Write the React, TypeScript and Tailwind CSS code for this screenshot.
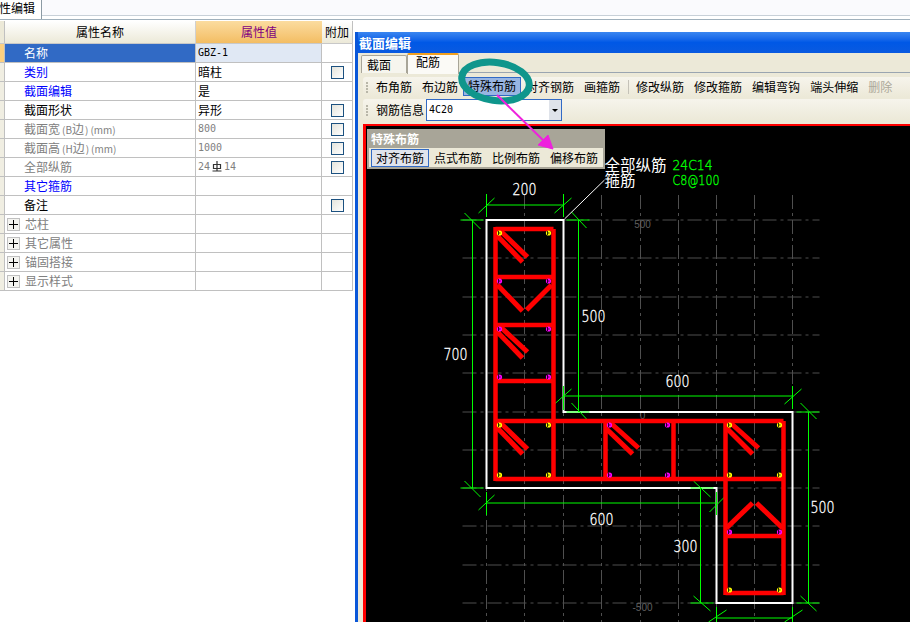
import type { ReactNode } from 'react'

type Row = {
  label: ReactNode
  value?: ReactNode
  color: string
  check?: boolean
  tree?: boolean
  selected?: boolean
}

const ValueNum = ({ children }: { children: ReactNode }) => (
  <span className="font-['DejaVu_Sans_Mono',monospace] text-[10px] text-[#808080]">{children}</span>
)

const RebarMark = () => (
  <svg width="10" height="11" viewBox="0 0 10 11" className="mx-[2px] inline-block align-[-2px]">
    <path d="M5 0V10M0.5 10H9.5M1.5 3.5H8.5V7.5H1.5Z" fill="none" stroke="#333" strokeWidth="1.2" />
  </svg>
)

const SizeLabel = ({ name, axis }: { name: string; axis: string }) => (
  <>
    {name}
    <span className="ml-[2px] text-[10px]">({axis}</span>边
    <span className="ml-[1px] text-[10px]">)</span>
    <span className="ml-[2px] text-[10px]">(mm)</span>
  </>
)

const rows: Row[] = [
  { label: '名称', color: 'text-white', selected: true, value: <span className="font-['DejaVu_Sans_Mono',monospace] text-[10px] text-black">GBZ-1</span> },
  { label: '类别', color: 'text-[#0000ff]', value: '暗柱', check: true },
  { label: '截面编辑', color: 'text-[#0000ff]', value: '是' },
  { label: '截面形状', color: 'text-black', value: '异形', check: true },
  { label: <SizeLabel name="截面宽" axis="B" />, color: 'text-[#808080]', value: <ValueNum>800</ValueNum>, check: true },
  { label: <SizeLabel name="截面高" axis="H" />, color: 'text-[#808080]', value: <ValueNum>1000</ValueNum>, check: true },
  { label: '全部纵筋', color: 'text-[#808080]', value: <ValueNum>24<RebarMark />14</ValueNum>, check: true },
  { label: '其它箍筋', color: 'text-[#0000ff]' },
  { label: '备注', color: 'text-black', check: true },
  { label: '芯柱', color: 'text-[#808080]', tree: true },
  { label: '其它属性', color: 'text-[#808080]', tree: true },
  { label: '锚固搭接', color: 'text-[#808080]', tree: true },
  { label: '显示样式', color: 'text-[#808080]', tree: true },
]

function PropertyTable() {
  return (
    <div className="mt-px w-[353px] text-xs leading-[18px]">
      <div className="flex h-[23px] border-b border-[#c8c8c8]">
        <div className="w-[5px] border-r border-[#c0c0c0] bg-[#ece9d8]" />
        <div className="flex w-[191px] items-center justify-center border-r border-[#d0d0d0] bg-gradient-to-b from-white to-[#ece9d8] text-black">属性名称</div>
        <div className="flex w-[126px] items-center justify-center bg-gradient-to-b from-[#fbdc9f] to-[#f3bd62] text-[#800080]">属性值</div>
        <div className="flex w-[31px] items-center justify-center border-r border-[#c0c0c0] bg-gradient-to-b from-white to-[#ece9d8] text-black">附加</div>
      </div>
      {rows.map((row, i) => (
        <div key={i} className="flex h-[19px] border-b border-[#c0c0c0]">
          <div className={`w-[5px] border-r border-[#c0c0c0] ${row.selected ? 'bg-[#fcd080]' : 'bg-[#f0eee2]'}`} />
          <div className={`flex w-[191px] items-center border-r border-[#c0c0c0] ${row.selected ? 'bg-[#316ac5]' : 'bg-white'} ${row.tree ? 'pl-[2px]' : 'pl-[19px]'}`}>
            {row.tree && (
              <span className="mr-[5px] flex h-[13px] w-[13px] items-center justify-center border border-[#c0c0c0] bg-[#f4f4f0]">
                <svg width="9" height="9" viewBox="0 0 9 9">
                  <path d="M0 4.5H9M4.5 0V9" stroke="#000" />
                </svg>
              </span>
            )}
            <span className={`whitespace-nowrap ${row.color}`}>{row.label}</span>
          </div>
          <div className={`flex w-[126px] items-center border-r border-[#c0c0c0] pl-[2px] ${row.selected ? 'bg-[#e0e8f4]' : 'bg-white'}`}>{row.value}</div>
          <div className="flex w-[31px] items-center justify-center border-r border-[#c0c0c0] bg-white">
            {row.check && <span className="h-[13px] w-[13px] border border-[#1c5180] bg-gradient-to-br from-[#e4e4dc] to-white" />}
          </div>
        </div>
      ))}
    </div>
  )
}

const Grip = () => (
  <span className="mr-[2px] flex flex-col gap-px">
    {[0, 1, 2, 3].map(i => (
      <span key={i} className="h-[2px] w-[2px] bg-[#b8b6a8]" />
    ))}
  </span>
)

function Toolbar() {
  const group1 = ['布角筋', '布边筋', '特殊布筋', '对齐钢筋', '画箍筋']
  const group2 = ['修改纵筋', '修改箍筋', '编辑弯钩', '端头伸缩']
  return (
    <div className="flex h-5 items-center gap-[2px] rounded-l-[3px] bg-gradient-to-b from-[#f6f4ec] to-[#ece9d8] pl-[3px] text-xs text-black">
      <Grip />
      {group1.map(t => (
        <span key={t} className={`h-[17px] px-1 leading-[16px] ${t === '特殊布筋' ? 'mt-[-1px] bg-[#98b5e2] outline outline-1 outline-[#316ac5]' : ''}`}>{t}</span>
      ))}
      <span className="mx-[1.5px] h-[14px] w-px bg-[#c5c2b8]" />
      {group2.map(t => (
        <span key={t} className="px-1">{t}</span>
      ))}
      <span className="px-1 text-[#aca899]">删除</span>
    </div>
  )
}

function ComboRow() {
  return (
    <div className="mt-[2px] flex h-[22px] items-center gap-[2px] rounded-l-[3px] bg-gradient-to-b from-[#f6f4ec] to-[#ece9d8] pl-[3px] text-xs text-black">
      <Grip />
      <span className="ml-1">钢筋信息</span>
      <div className="flex h-[22px] w-[136px] items-center border border-[#316ac5] bg-white pl-[2px]">
        <span className="flex-1 font-['DejaVu_Sans_Mono',monospace] text-[10px]">4C20</span>
        <span className="flex h-full w-[12px] items-center justify-center bg-[#dfe3ea]">
          <span className="border-x-[3px] border-t-[3px] border-x-transparent border-t-black" />
        </span>
      </div>
    </div>
  )
}

function SpecialPopup() {
  return (
    <div className="absolute left-px top-[3px] w-[238px] whitespace-nowrap border-2 border-[#a8a598] bg-[#ece9d8] text-xs">
      <div className="h-[17px] bg-[#a8a598] pl-[2px] font-bold leading-[16px] text-white">特殊布筋</div>
      <div className="flex h-[19px] items-center gap-[10px] pl-[2px] text-black">
        <span className="mr-[-5px] h-[18px] border border-[#316ac5] bg-[#e0e4ec] px-1 leading-[15px]">对齐布筋</span>
        <span>点式布筋</span>
        <span>比例布筋</span>
        <span>偏移布筋</span>
      </div>
    </div>
  )
}

// page coordinates, the viewBox below puts them in place
const gridX = [487, 525, 564, 602, 641, 679, 717, 755, 793]
const gridY = [220, 258, 297, 335, 373, 412, 450, 488, 526, 565, 603]

const whiteOutline = '487,220 564,220 564,412 793,412 793,603 717,603 717,488 487,488'

const redLines = [
  [496, 229, 554, 229], [496, 277, 554, 277], [496, 325, 554, 325], [496, 381, 554, 381],
  [496, 421, 784, 421], [496, 479, 784, 479], [726, 536, 784, 536], [726, 593, 784, 593],
  [496, 227, 496, 481], [554, 229, 554, 479], [606, 421, 606, 479], [674, 421, 674, 479],
  [726, 421, 726, 595], [784, 421, 784, 595],
]

const hooks = [
  [500, 230, 528, 257], [497, 235, 523, 262],
  [498, 285, 523, 311], [552, 285, 527, 310],
  [500, 326, 528, 352], [497, 331, 523, 358],
  [500, 422, 528, 449], [497, 427, 523, 454],
  [610, 422, 639, 448], [606, 428, 633, 454],
  [730, 422, 759, 448], [726, 427, 753, 454],
  [727, 528, 753, 503], [783, 528, 757, 503],
]

const greenLines = [
  // 200 top
  [487, 205, 564, 205], [487, 194, 487, 217], [479, 213, 495, 198], [564, 194, 564, 217], [555, 213, 572, 198],
  // 700 left
  [473, 220, 473, 488], [461, 220, 484, 220], [465, 213, 481, 229], [461, 488, 484, 488], [465, 481, 481, 497],
  // 500 inner
  [579, 220, 579, 412], [567, 220, 590, 220], [572, 212, 587, 228], [567, 412, 590, 412], [572, 403, 587, 419],
  // 600 upper
  [564, 396, 793, 396], [564, 386, 564, 410], [555, 404, 572, 389], [793, 386, 793, 409], [785, 404, 802, 389],
  // 500 right
  [809, 412, 809, 603], [797, 412, 820, 412], [801, 403, 817, 419], [797, 603, 820, 603], [801, 596, 817, 611],
  // 300
  [701, 488, 701, 603], [691, 488, 714, 488], [694, 481, 711, 497], [691, 603, 714, 603], [694, 596, 711, 611],
  // 600 lower
  [487, 503, 717, 503], [487, 492, 487, 515], [479, 510, 495, 495], [717, 492, 717, 515], [710, 512, 727, 495],
  // 200 bottom
  [717, 618, 793, 618], [717, 607, 717, 622], [709, 622, 727, 610], [793, 607, 793, 622], [785, 622, 803, 610],
]

const yellowBars = [[500, 233], [549, 233], [500, 425], [549, 425], [500, 475], [549, 475], [730, 425], [780, 425], [730, 475], [780, 475], [730, 590], [780, 590]]
const pinkBars = [[500, 281], [549, 281], [500, 329], [549, 329], [500, 377], [549, 377], [610, 425], [610, 475], [668, 425], [668, 475], [730, 532], [780, 532]]

const dimLabels: [string, number, number][] = [
  ['200', 525, 195], ['700', 456, 360], ['500', 594, 322], ['600', 678, 387],
  ['600', 602, 525], ['300', 686, 552], ['500', 823, 513],
]

const Bar = ({ x, y, color }: { x: number; y: number; color: string }) => (
  <g>
    <circle cx={x} cy={y} r="2.6" fill={color} />
    <path d={`M${x - 1} ${y - 2}V${y + 2}M${x - 1} ${y}H${x + 1}`} stroke="#000" strokeWidth="0.8" fill="none" />
  </g>
)

function SectionDrawing() {
  return (
    <svg viewBox="367 126 543 496" className="h-full w-full">
      {gridX.map(x => (
        <line key={x} x1={x} y1={195} x2={x} y2={622} stroke="#4f4f4f" strokeDasharray="14 4 3 4" />
      ))}
      {gridY.map(y => (
        <line key={y} x1={463} y1={y} x2={820} y2={y} stroke="#4f4f4f" strokeDasharray="14 4 3 4" />
      ))}
      <g fontFamily="Liberation Sans, sans-serif" fontSize="10" fill="#5f5f5f" textAnchor="middle">
        <text x="643" y="228">500</text>
        <text x="643" y="419">0</text>
        <text x="643" y="611">-500</text>
      </g>
      <polygon points={whiteOutline} fill="none" stroke="#fff" strokeWidth="2" />
      {greenLines.map((l, i) => (
        <line key={i} x1={l[0]} y1={l[1]} x2={l[2]} y2={l[3]} stroke="#00ff00" />
      ))}
      {redLines.map((l, i) => (
        <line key={i} x1={l[0]} y1={l[1]} x2={l[2]} y2={l[3]} stroke="#ff0000" strokeWidth="4.5" />
      ))}
      {hooks.map((l, i) => (
        <line key={i} x1={l[0]} y1={l[1]} x2={l[2]} y2={l[3]} stroke="#ff0000" strokeWidth="5" />
      ))}
      {yellowBars.map(b => (
        <Bar key={b.join()} x={b[0]} y={b[1]} color="#ffff00" />
      ))}
      {pinkBars.map(b => (
        <Bar key={b.join()} x={b[0]} y={b[1]} color="#ff00ff" />
      ))}
      <line x1="565" y1="219" x2="605" y2="180" stroke="#fff" />
      <g fontFamily="DejaVu Sans, sans-serif" fontWeight="200" fontSize="15" fill="#fff" stroke="#fff" strokeWidth="0.35" textAnchor="middle">
        {dimLabels.map(([t, x, y]) => (
          <text key={`${t}${x}`} x={x} y={y} textLength="24" lengthAdjust="spacingAndGlyphs">{t}</text>
        ))}
      </g>
      <g fontFamily="Noto Sans CJK SC, sans-serif" fontSize="15.5" fill="#fff">
        <text x="605" y="171">全部纵筋</text>
        <text x="605" y="186">箍筋</text>
      </g>
      <g fontFamily="DejaVu Sans, sans-serif" fontWeight="200" fontSize="14" fill="#00ff00" stroke="#00ff00" strokeWidth="0.35">
        <text x="673" y="170" textLength="40" lengthAdjust="spacingAndGlyphs">24C14</text>
        <text x="673" y="185" textLength="47" lengthAdjust="spacingAndGlyphs">C8@100</text>
      </g>
    </svg>
  )
}

function SectionWindow() {
  return (
    <div className="mt-3 flex h-[590px] w-[555px] flex-col border-l-[3px] border-[#0a57d8] bg-[#ece9d8]">
      <div className="h-[21px] shrink-0 bg-gradient-to-b from-[#3a86f0] via-[#0058e6] to-[#0a5ae0] pl-px pt-px text-[13px] font-bold leading-[20px] text-white">截面编辑</div>
      <div className="flex h-5 shrink-0 items-end pl-[3px] text-xs text-black">
        <span className="h-[18px] w-[46px] rounded-t-[2px] border border-b-0 border-[#a8a598] bg-[#f6f5ee] pr-[10px] text-center leading-[17px]">截面</span>
        <span className="relative z-10 mb-[-1px] h-[21px] w-[52px] rounded-t-[2px] border-x border-t-2 border-[#a8a598] border-t-[#f0a020] bg-[#fbfaf6] pr-[10px] text-center leading-[13px]">配筋</span>
        <span className="flex-1 border-b border-[#9aa5b0]" />
      </div>
      <div className="flex min-h-0 flex-1 flex-col pl-[5px] pt-1">
        <Toolbar />
        <ComboRow />
        <div className="relative mt-[3px] min-h-0 flex-1 border-l-[3px] border-t-2 border-[#ff0000] bg-black">
          <SectionDrawing />
          <SpecialPopup />
        </div>
      </div>
    </div>
  )
}

export default function App() {
  return (
    <div className="relative h-[622px] w-[910px] overflow-hidden bg-white font-['Noto_Sans_CJK_SC',sans-serif]">
      <div className="flex h-5 border-b border-[#a0b0bc]">
        <div className="w-[42px] overflow-hidden whitespace-nowrap border-r border-[#8c9aa4] text-xs leading-[15px] text-black">
          <span className="ml-[-13px]">属性编辑</span>
        </div>
        <div className="mb-[3px] flex-1 border-b border-[#c8d0d8] bg-[#fafafd]" />
      </div>
      <div className="flex">
        <div className="w-[355px]">
          <PropertyTable />
        </div>
        <SectionWindow />
      </div>
      {/* hand drawn annotation on top of the screenshot */}
      <svg width="910" height="622" className="pointer-events-none absolute left-0 top-0">
        <ellipse cx="495.5" cy="81.5" rx="34" ry="19" fill="none" stroke="#0f968c" strokeWidth="7" transform="rotate(8 495.5 81.5)" />
        <path d="M497 95L546 143" stroke="#ee22dd" strokeWidth="2" />
        <path d="M553 149L538 145L548 135Z" fill="#ee22dd" stroke="#ee22dd" />
      </svg>
    </div>
  )
}
